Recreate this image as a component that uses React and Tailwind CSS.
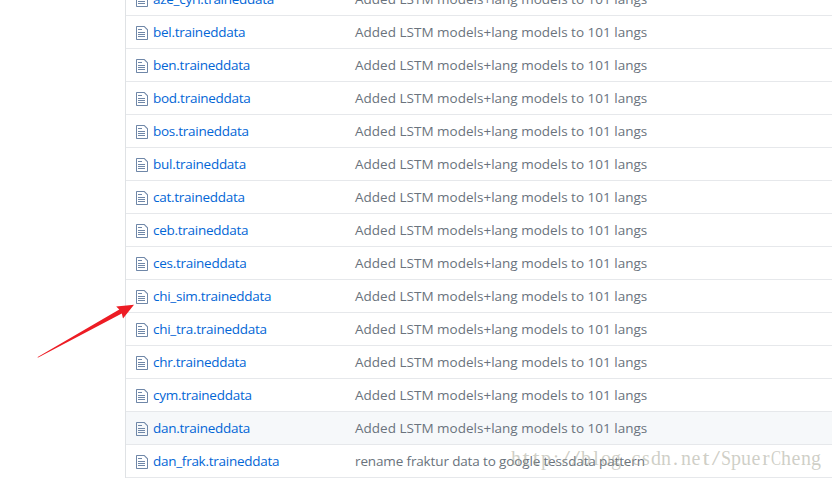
const MESSAGE = 'Added LSTM models+lang models to 101 langs';

const files = [
  { name: 'aze_cyrl.traineddata' },
  { name: 'bel.traineddata' },
  { name: 'ben.traineddata' },
  { name: 'bod.traineddata' },
  { name: 'bos.traineddata' },
  { name: 'bul.traineddata' },
  { name: 'cat.traineddata' },
  { name: 'ceb.traineddata' },
  { name: 'ces.traineddata' },
  { name: 'chi_sim.traineddata' },
  { name: 'chi_tra.traineddata' },
  { name: 'chr.traineddata' },
  { name: 'cym.traineddata' },
  { name: 'dan.traineddata', active: true },
  {
    name: 'dan_frak.traineddata',
    message: 'rename fraktur data to google tessdata pattern',
    tracking: 'tracking-[-0.14px]',
  },
];

// Glyphs that sit differently from the rest inside their fixed-width cell.
const glyphStyles = {
  '/': 'justify-center scale-x-150',
  '.': 'justify-start pl-[2px]',
  t: 'justify-center scale-x-125',
  r: 'justify-center scale-x-110',
  S: 'justify-center scale-x-90',
  C: 'justify-center scale-x-75',
};

function FileIcon() {
  return (
    <svg className="mt-[2px] h-4 w-3 shrink-0 fill-[#6f87a8]" viewBox="0 0 12 16" aria-hidden="true">
      <path
        fillRule="evenodd"
        d="M6 5H2V4h4v1zM2 8h7V7H2v1zm0 2h7V9H2v1zm0 2h7v-1H2v1zm10-7.5V14c0 .55-.45 1-1 1H1c-.55 0-1-.45-1-1V2c0-.55.45-1 1-1h7.5L12 4.5zM11 5L8 2H1v12h10V5z"
      />
    </svg>
  );
}

function FileRow({ name, message = MESSAGE, tracking = 'tracking-[0.01px]', active }) {
  return (
    <li
      className={`flex h-[33px] shrink-0 items-center border-b border-[#e6e8eb] pl-[10px] ${active ? 'bg-[#f6f8fa]' : 'bg-white'}`}
    >
      <FileIcon />
      <a className="ml-[5px] w-[202px] shrink-0 whitespace-nowrap tracking-[-0.27px] text-[#0366d6]">{name}</a>
      <span className={`whitespace-nowrap text-[#6a737d] ${tracking}`}>{message}</span>
    </li>
  );
}

export default function App() {
  return (
    <div className="relative h-[478px] w-[832px] overflow-hidden bg-white pl-[125px] font-['Open_Sans','Segoe_UI',sans-serif] text-[13.5px] leading-5">
      <ul className="-mt-[17px] flex flex-col border-l border-[#dfe2e5]">
        {files.map((file) => (
          <FileRow key={file.name} {...file} />
        ))}
      </ul>
      <svg className="absolute top-[295px] left-[30px] h-[70px] w-[110px] fill-[#ed1c24]" viewBox="30 295 110 70" aria-hidden="true">
        <path d="M37.3 357.3L119.3 309.6 116.2 306.5 134 304.8 123 318.5 121.8 313.6 38.2 357.6Z" />
      </svg>
      <div className="absolute top-[446px] left-[511px] flex font-['Liberation_Serif',serif] text-[20px] leading-6 text-[#a0a08f]/50">
        {[...'http://blog.csdn.net/SpuerCheng'].map((char, i) => (
          <span key={i} className={`flex w-[10px] ${glyphStyles[char] ?? 'justify-center'}`}>
            {char}
          </span>
        ))}
      </div>
    </div>
  );
}
